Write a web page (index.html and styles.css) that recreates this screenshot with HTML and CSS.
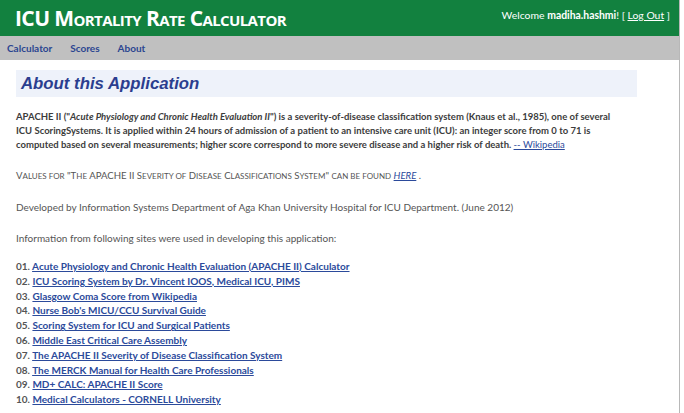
FILE: index.html
```html
<!DOCTYPE html>
<html>
<head>
<meta charset="utf-8">
<link rel="stylesheet" href="styles.css">
</head>
<body>
<div class="page">
  <header class="top">
    <h1 class="title">ICU Mortality Rate Calculator</h1>
    <div class="login">Welcome <b>madiha.hashmi</b>! [ <a href="#">Log Out</a> ]</div>
  </header>
  <nav class="menu">
    <a href="#">Calculator</a>
    <a href="#">Scores</a>
    <a href="#">About</a>
  </nav>
  <main class="content">
    <h2 class="heading">About this Application</h2>
    <p class="intro">APACHE II ("<i>Acute Physiology and Chronic Health Evaluation II</i>") is a severity-of-disease classification system (Knaus et al., 1985), one of several<br>ICU ScoringSystems. It is applied within 24 hours of admission of a patient to an intensive care unit (ICU): an integer score from 0 to 71 is<br>computed based on several measurements; higher score correspond to more severe disease and a higher risk of death. <a href="#" class="plain">-- Wikipedia</a></p>
    <p class="note caps">V<span class="sc">ALUES FOR</span> "T<span class="sc">HE</span> APACHE II S<span class="sc">EVERITY OF</span> D<span class="sc">ISEASE</span> C<span class="sc">LASSIFICATIONS</span> S<span class="sc">YSTEM</span>" <span class="sc">CAN BE FOUND</span> <a href="#" class="plain"><i>HERE</i></a> .</p>
    <p class="note">Developed by Information Systems Department of Aga Khan University Hospital for ICU Department. (June 2012)</p>
    <p class="note">Information from following sites were used in developing this application:</p>
    <ol class="sites">
      <li><span class="num">01.</span> <a href="#">Acute Physiology and Chronic Health Evaluation (APACHE II) Calculator</a></li>
      <li><span class="num">02.</span> <a href="#">ICU Scoring System by Dr. Vincent IOOS, Medical ICU, PIMS</a></li>
      <li><span class="num">03.</span> <a href="#">Glasgow Coma Score from Wikipedia</a></li>
      <li><span class="num">04.</span> <a href="#">Nurse Bob's MICU/CCU Survival Guide</a></li>
      <li><span class="num">05.</span> <a href="#">Scoring System for ICU and Surgical Patients</a></li>
      <li><span class="num">06.</span> <a href="#">Middle East Critical Care Assembly</a></li>
      <li><span class="num">07.</span> <a href="#">The APACHE II Severity of Disease Classification System</a></li>
      <li><span class="num">08.</span> <a href="#">The MERCK Manual for Health Care Professionals</a></li>
      <li><span class="num">09.</span> <a href="#">MD+ CALC: APACHE II Score</a></li>
      <li><span class="num">10.</span> <a href="#">Medical Calculators - CORNELL University</a></li>
    </ol>
  </main>
</div>
</body>
</html>
```
FILE: styles.css
```css
html, body {
  margin: 0;
  padding: 0;
  background: #ffffff;
}
body {
  font-family: Lato, "Open Sans", sans-serif;
  color: #444;
}
.page {
  width: 679px;
  min-height: 413px;
  border-right: 1px solid #b8b8b8;
}
.top {
  height: 36px;
  background: #12813f;
  display: flex;
  justify-content: space-between;
  align-items: flex-start;
  color: #fff;
}
.title {
  margin: 0;
  padding: 5px 0 0 15px;
  font-family: "Open Sans", sans-serif;
  font-size: 21px;
  line-height: 26px;
  font-weight: 700;
  font-variant: small-caps;
  letter-spacing: -0.6px;
}
.login {
  padding: 8px 9px 0 0;
  font-size: 10.4px;
  line-height: 14px;
}
.login a {
  color: #fff;
}
.menu {
  height: 24px;
  background: #c0c0c0;
  display: flex;
  align-items: center;
  gap: 18px;
  padding-left: 7px;
}
.menu a {
  color: #2b4590;
  font-size: 10px;
  font-weight: 700;
  text-decoration: none;
}
.content {
  padding: 10px 0 0 16px;
  width: 621px;
}
.heading {
  margin: 0;
  height: 27px;
  background: #eef2fa;
  padding-left: 5px;
  font-family: "Liberation Sans", Arial, sans-serif;
  font-style: italic;
  font-weight: 700;
  font-size: 16.8px;
  line-height: 28px;
  color: #2b3e8f;
}
.intro {
  margin: 13px 0 0;
  width: 640px;
  font-size: 9.5px;
  line-height: 14px;
  font-weight: 700;
  color: #3c3c3c;
}
.note {
  margin: 17px 0 0;
  font-size: 10px;
  line-height: 14px;
  color: #555;
}
.caps {
  font-size: 9.6px;
}
.sc {
  font-size: 8px;
}
a {
  color: #2b4a9b;
}
.plain {
  font-weight: 400;
}
.sites {
  list-style: none;
  margin: 14px 0 0;
  padding: 0;
}
.sites li {
  font-size: 10px;
  line-height: 14.8px;
  font-weight: 700;
}
.num {
  color: #555;
}
```
